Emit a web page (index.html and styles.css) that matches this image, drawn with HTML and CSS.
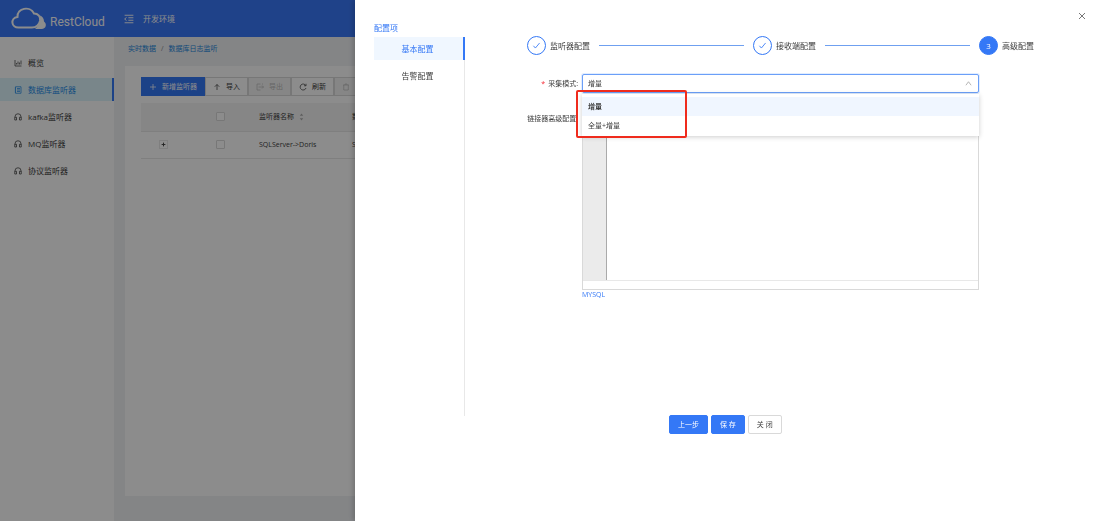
FILE: index.html
```html
<!DOCTYPE html>
<html lang="zh-CN">
<head>
<meta charset="utf-8">
<meta name="viewport" content="width=device-width, initial-scale=1">
<title>RestCloud 数据库监听器</title>
<link rel="stylesheet" href="styles.css">
</head>
<body>
<svg class="defs" aria-hidden="true">
  <symbol id="headset" viewBox="0 0 16 16"><path d="M2 9V7.500a6 6 0 0 1 12 0V9M1.500 8.500h3.500v5.500H1.500zM14.500 8.500H11v5.500h3.500z"/></symbol>
  <symbol id="check" viewBox="0 0 16 16"><path d="M2.500 8.500l3.500 4 7.500-9"/></symbol>
</svg>
<div class="app">
  <header class="topbar">
    <a class="brand" href="#">
      <svg class="logo" viewBox="0 0 36 24" aria-hidden="true">
        <path class="cloud-back" d="M24 22h6.500c5 0 5.500-5.500 2.500-7.500C33 11 31 9 29 8.500c1 6-1 10-5 13.500z"/>
        <path class="cloud-front" d="M8 20.500C0 21-1 11 6.500 10 6 1 19-1.500 23 6.500c4 0 7 3 6 7.500-1 4-4 6.500-8 6.500z"/>
      </svg>
      <span>RestCloud</span>
    </a>
    <button class="fold" aria-label="折叠菜单"><svg viewBox="0 0 16 16"><path d="M1 2h14M7 6h8M7 10h8M1 14h14M4 5.500L1 8l3 2.500"/></svg></button>
    <span class="env">开发环境</span>
  </header>
  <nav class="sidebar">
    <a href="#"><svg viewBox="0 0 16 16"><path d="M2 2v12h13M5 11V8M8 11V5M11 11V7M14 11V3"/></svg>概览</a>
    <a href="#" class="active"><svg viewBox="0 0 16 16"><path d="M3 1.500h11v13H3zM6 5h6M6 8h6M6 11h6M1.500 4H4M1.500 8H4M1.500 12H4"/></svg>数据库监听器</a>
    <a href="#"><svg><use href="#headset"/></svg>kafka监听器</a>
    <a href="#"><svg><use href="#headset"/></svg>MQ监听器</a>
    <a href="#"><svg><use href="#headset"/></svg>协议监听器</a>
  </nav>
  <main class="content">
    <div class="crumbs"><a href="#">实时数据</a><span>/</span><a href="#">数据库日志监听</a></div>
    <section class="panel">
      <div class="toolbar">
        <button class="primary"><svg viewBox="0 0 16 16"><path d="M8 2v12M2 8h12"/></svg>新增监听器</button>
        <button><svg viewBox="0 0 16 16"><path d="M8 14V3M3.500 7.500L8 3l4.500 4.500"/></svg>导入</button>
        <button disabled><svg viewBox="0 0 16 16"><path d="M9 2H2v12h7M5 8h10M12 5l3 3-3 3M12 2h2"/></svg>导出</button>
        <button><svg viewBox="0 0 16 16"><path d="M13.500 5A6 6 0 1 0 14 10M14 1.500V5.500h-4"/></svg>刷新</button>
        <button disabled><svg viewBox="0 0 16 16"><path d="M2 4h12M6 4V2h4v2M3.500 4v10h9V4"/></svg>删除</button>
      </div>
      <table>
        <thead><tr>
          <th class="col-expand"></th>
          <th class="col-check"><input type="checkbox" aria-label="全选"></th>
          <th class="col-name">监听器名称<svg class="sort" viewBox="0 0 8 14"><path d="M4 1l3 4H1zM4 13l3-4H1z"/></svg></th>
          <th>数据源类型</th>
        </tr></thead>
        <tbody><tr>
          <td class="col-expand"><button class="expand" aria-label="展开"><svg viewBox="0 0 8 8"><path d="M4 1v6M1 4h6"/></svg></button></td>
          <td class="col-check"><input type="checkbox" aria-label="选择"></td>
          <td class="col-name">SQLServer-&gt;Doris</td>
          <td>SQLServer</td>
        </tr></tbody>
      </table>
    </section>
  </main>
</div>

<div class="mask"></div>
<aside class="drawer" role="dialog" aria-label="配置项">
  <button class="close" aria-label="关闭"><svg viewBox="0 0 8 8"><path d="M1 1l6 6M7 1L1 7"/></svg></button>
  <div class="settings">
    <nav class="tabs">
      <h2>配置项</h2>
      <div class="tab-list">
        <button class="active">基本配置</button>
        <button>告警配置</button>
      </div>
    </nav>
    <div class="editor">
      <ol class="steps">
        <li><span class="dot"><svg><use href="#check"/></svg></span>监听器配置</li>
        <li><span class="dot"><svg><use href="#check"/></svg></span>接收端配置</li>
        <li class="current"><span class="dot">3</span>高级配置</li>
      </ol>
      <form class="form">
        <label for="mode" class="required">采集模式:</label>
        <div class="select-wrap">
          <select id="mode"><option>增量</option><option>全量+增量</option></select>
          <svg class="arrow" viewBox="0 0 8 8"><path d="M1 6l3-4 3 4"/></svg>
          <ul class="dropdown" role="listbox" aria-label="采集模式">
            <li role="option" aria-selected="true">增量</li>
            <li role="option" aria-selected="false">全量+增量</li>
          </ul>
        </div>
        <label for="code">链接器高级配置:</label>
        <div>
          <div class="code">
            <div class="code-main"><div class="gutter"></div><textarea id="code"></textarea></div>
            <div class="code-status"></div>
          </div>
          <a class="lang" href="#">MYSQL</a>
        </div>
      </form>
      <div class="actions">
        <button class="primary">上一步</button>
        <button class="primary">保 存</button>
        <button>关 闭</button>
      </div>
    </div>
  </div>
</aside>
</body>
</html>
```

FILE: styles.css
```css
*, ::before, ::after { box-sizing: border-box; }
:root { --blue: #3478f6; --line: #d9d9d9; --text: #404040; }
body {
  margin: 0;
  overflow: hidden;
  color: var(--text);
  font: 7px/12px "Open Sans", "Noto Sans CJK SC", sans-serif;
}
button, input, select, textarea { font: inherit; color: inherit; }
button { padding: 0; border: 0; background: none; cursor: pointer; }
a { color: inherit; text-decoration: none; }
svg { fill: none; stroke: currentColor; stroke-width: 1.5; }
.defs { position: absolute; width: 0; height: 0; }

.app {
  display: grid;
  grid-template: 37px 1fr / 114px 1fr;
  min-height: 100vh;
  background: #f0f2f5;
}
.topbar {
  grid-column: 1 / -1;
  display: flex;
  align-items: center;
  padding-left: 11px;
  background: #3a79fa;
  color: #fff;
  font-size: 8px;
}
.brand {
  display: flex;
  align-items: center;
  gap: 3px;
  width: 113px;
  font: 11px/16px Roboto, sans-serif;
}
.brand span { padding-top: 6px; font-size: 12px; }
.logo { width: 36px; height: 24px; }
.cloud-front { stroke-width: 2; fill: #3a79fa; }
.cloud-back { fill: #fff; stroke: none; }
.fold { width: 10px; height: 10px; margin-right: 9px; }
.fold svg { display: block; width: 10px; height: 10px; }

.sidebar {
  display: flex;
  flex-direction: column;
  gap: 4px;
  padding-top: 14px;
  background: #fff;
  font-size: 8px;
}
.sidebar a {
  display: flex;
  align-items: center;
  gap: 6px;
  height: 23px;
  padding: 0 0 0 14px;
}
.sidebar a.active {
  border-right: 2px solid var(--blue);
  background: #dcf5fb;
  color: #278ce9;
}
.sidebar svg { width: 8px; height: 8px; }
.content { padding: 6px 0 25px 11px; min-width: 0; display: flex; flex-direction: column; }
.crumbs { display: flex; gap: 5px; padding-left: 3px; height: 23px; color: #2588dc; }
.crumbs span { color: #888; }
.panel { flex: 1; padding: 11px 16px; background: #fff; }
.toolbar { display: flex; }
.toolbar button {
  display: flex;
  align-items: center;
  gap: 5px;
  height: 19px;
  padding: 0 7px;
  border: 1px solid var(--line);
}
.toolbar svg { width: 8px; height: 8px; }
.toolbar button:disabled { color: #bbb; background: #f5f5f5; }
.toolbar .primary { border-color: var(--blue); }
.primary { background: var(--blue); color: #fff; }
table { width: 100%; margin-top: 7px; border-collapse: collapse; table-layout: fixed; }
th, td { height: 27px; padding: 0; text-align: left; font-weight: 400; border-bottom: 1px solid #e8e8e8; }
th { height: 28px; background: #f5f5f5; }
.col-expand { width: 45px; text-align: center; }
.col-check { width: 73px; padding-left: 30px; }
.col-name { width: 93px; }
table input {
  display: block;
  appearance: none;
  width: 9px;
  height: 9px;
  margin: 0;
  border: 1px solid var(--line);
  border-radius: 1px;
  background: #fff;
}
.expand { width: 9px; height: 9px; border: 1px solid #e8e8e8; vertical-align: middle; }
.expand svg { display: block; width: 5px; height: 5px; margin: auto; }
.sort { width: 5px; height: 8px; margin-left: 5px; vertical-align: middle; fill: #aaa; stroke: none; }

.mask { position: fixed; inset: 0; background: rgba(0, 0, 0, .45); }
.drawer {
  position: fixed;
  inset: 0 0 0 355px;
  padding: 22px 64px 0 19px;
  background: #fff;
  box-shadow: -2px 0 5px rgba(0, 0, 0, .2);
}
.close { position: absolute; top: 12px; right: 12px; width: 8px; height: 8px; color: #777; }
.close svg { display: block; stroke-width: 1; }
.settings { display: flex; gap: 62px; }
.tabs { flex: 0 0 91px; font-size: 8px; }
.tabs h2 { margin: 0; height: 15px; color: var(--blue); font: inherit; }
.tab-list {
  display: flex;
  flex-direction: column;
  gap: 4px;
  height: 379px;
  border-right: 1px solid #e8e8e8;
}
.tab-list button { height: 23px; margin-right: -1px; padding-right: 4px; }
.tab-list .active { border-right: 2px solid var(--blue); padding-right: 2px; background: #f0f7ff; color: var(--blue); }
.editor { flex: 1; min-width: 0; padding-top: 14px; }
.steps { display: flex; margin: 0; padding: 0; list-style: none; font-size: 8px; }
.steps li { display: flex; align-items: center; flex: 1; white-space: nowrap; }
.steps li:not(:last-child)::after { content: ""; flex: 1; height: 1px; margin: 0 9px; background: #6fa0f0; }
.steps li:last-child { flex: none; }
.dot {
  display: grid;
  place-items: center;
  width: 19px;
  height: 19px;
  margin-right: 4px;
  border: 1px solid var(--blue);
  border-radius: 50%;
  color: var(--blue);
}
.dot svg { width: 9px; height: 9px; }
.current .dot { background: var(--blue); color: #fff; }
.form {
  display: grid;
  grid-template-columns: 51px 1fr;
  column-gap: 4px;
  row-gap: 16px;
  margin: 19px 55px 0 0;
}
.form label { padding-top: 4px; text-align: right; white-space: nowrap; }
.required::before { content: "*"; margin-right: 3px; color: #f5222d; }
.select-wrap { position: relative; height: 19px; }
.select-wrap select {
  display: block;
  appearance: none;
  width: 100%;
  height: 19px;
  padding: 0 5px;
  border: 1px solid #6b9ff8;
  border-radius: 2px;
  background: #fff;
  box-shadow: 0 0 0 1px #e1edff;
}
.arrow { position: absolute; top: 6px; right: 7px; width: 7px; height: 7px; color: #aaa; stroke-width: 1; }
.dropdown {
  position: absolute;
  z-index: 1;
  inset: 20px 0 auto;
  margin: 0;
  padding: 3px 0 1px;
  list-style: none;
  background: #fff;
  box-shadow: 0 1px 5px rgba(0, 0, 0, .2);
}
.dropdown li { padding: 4px 6px 3px; }
.dropdown [aria-selected="true"] { background: #f0f6ff; font-weight: 600; }
.dropdown::after {
  content: "";
  position: absolute;
  top: -4px;
  left: -6px;
  width: 111px;
  height: 48px;
  border: 2px solid #ef2b1d;
  border-radius: 2px;
}
.code { border: 1px solid var(--line); }
.code-main { display: flex; height: 171px; border-bottom: 1px solid #e8e8e8; }
.gutter { width: 24px; background: #ebebeb; border-right: 1px solid #aaa; }
.code textarea { flex: 1; border: 0; outline: 0; resize: none; background: #fff; }
.code-status { height: 8px; }
.lang { display: block; height: 10px; line-height: 10px; color: var(--blue); }
.actions { display: flex; gap: 3px; margin: 115px 0 0 142px; }
.actions button {
  height: 19px;
  padding: 0 8px;
  border: 1px solid var(--line);
  border-radius: 2px;
}
.actions .primary { border-color: var(--blue); }
```
